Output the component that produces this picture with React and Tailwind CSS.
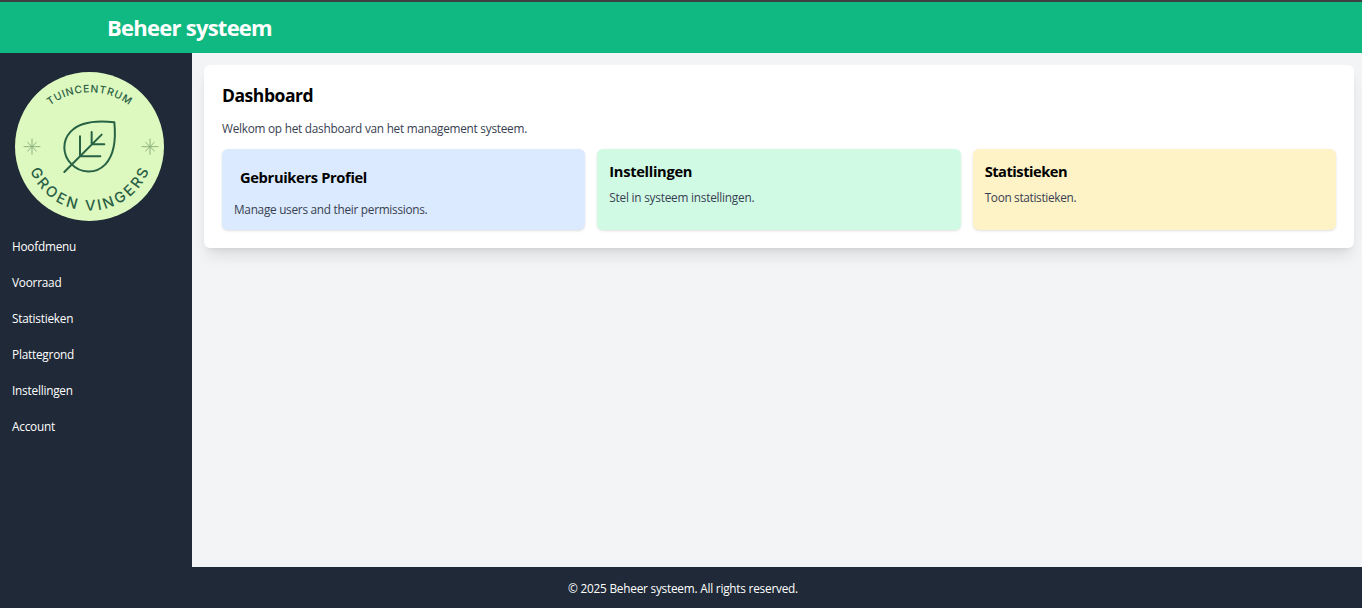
const navItems = ['Hoofdmenu', 'Voorraad', 'Statistieken', 'Plattegrond', 'Instellingen', 'Account'];

function Star({ x, y }) {
  return (
    <g transform={`translate(${x} ${y})`} stroke="#8db27c" strokeWidth="3" strokeLinecap="round">
      <path d="M-24 0H24M0-23V23M-13-13L13 13M-13 13L13-13" />
    </g>
  );
}

function Logo() {
  return (
    <svg viewBox="45 36 450 450" className="block size-[150px]" fontFamily="Inter, sans-serif" fill="#2a6045">
      <defs>
        <path id="arc-top" d="M109 177A200 200 0 0 1 429 177" />
        <path id="arc-bottom" d="M76 259A193 193 0 0 0 462 259" />
      </defs>
      <circle cx="268.5" cy="259.5" r="223.5" fill="#def9c0" />
      <text fontSize="31" fontWeight="500" textAnchor="middle" letterSpacing="2.2">
        <textPath href="#arc-top" startOffset="50%">TUINCENTRUM</textPath>
      </text>
      <text fontSize="44" fontWeight="500" textAnchor="middle" letterSpacing="8">
        <textPath href="#arc-bottom" startOffset="50.6%">GROEN VINGERS</textPath>
      </text>
      <g fill="none" stroke="#286244" strokeWidth="6" strokeLinecap="round" strokeLinejoin="round">
        <path d="M343 187C290 181 240 186 212 215C186 243 187 283 213 311C241 341 287 343 316 313C343 284 348 237 343 187Z" />
        <path d="M193 336L305 224M240 229V289H301M275 216V253H313" />
      </g>
      <Star x={96} y={260} />
      <Star x={450} y={260} />
    </svg>
  );
}

export default function App() {
  return (
    <div className="flex h-[608px] flex-col overflow-hidden bg-[#f3f4f6] font-['Open_Sans','Noto_Sans',sans-serif] text-[11.8px] leading-[18px] text-black">
      <header className="h-[53px] shrink-0 border-t-2 border-[#3f4042] bg-[#10b981] pt-3 pl-[107px] text-white">
        <h1 className="text-[22px] leading-[27px] font-bold tracking-[-0.75px]">Beheer systeem</h1>
      </header>
      <div className="flex min-h-0 flex-1">
        <aside className="w-48 shrink-0 bg-[#1f2937] pt-[19px] text-white">
          <div className="pl-[15px]">
            <Logo />
          </div>
          <nav className="mt-[9px] flex flex-col gap-1.5">
            {navItems.map((item) => (
              <a key={item} href="#" className="px-3 py-1.5 tracking-[-0.22px]">
                {item}
              </a>
            ))}
          </nav>
        </aside>
        <main className="flex-1 pt-3 pr-2 pl-3">
          <section className="rounded-md bg-white p-[18px] shadow-lg">
            <h2 className="text-[17.5px] leading-6 font-bold tracking-[-0.45px]">Dashboard</h2>
            <p className="mt-3 tracking-[-0.25px] text-[#374151]">Welkom op het dashboard van het management systeem.</p>
            <div className="mt-3 grid grid-cols-3 gap-3">
              <article className="rounded-md bg-[#dbeafe] p-3 shadow-sm">
                <h3 className="p-1.5 text-[14.7px] leading-[21px] font-bold tracking-[-0.35px]">Gebruikers Profiel</h3>
                <p className="mt-1.5 tracking-[-0.27px] text-[#374151]">Manage users and their permissions.</p>
              </article>
              <article className="rounded-md bg-[#d1fae5] p-3 shadow-sm">
                <h3 className="text-[14.7px] leading-[21px] font-bold tracking-[-0.32px]">Instellingen</h3>
                <p className="mt-1.5 tracking-[-0.22px] text-[#374151]">Stel in systeem instellingen.</p>
              </article>
              <article className="rounded-md bg-[#fef3c7] p-3 shadow-sm">
                <h3 className="text-[14.7px] leading-[21px] font-bold tracking-[-0.5px]">Statistieken</h3>
                <p className="mt-1.5 tracking-[-0.31px] text-[#374151]">Toon statistieken.</p>
              </article>
            </div>
          </section>
        </main>
      </div>
      <footer className="h-[41px] shrink-0 bg-[#1f2937] pt-3 pl-1 text-center text-white">
        <p className="tracking-[-0.22px]">© 2025 Beheer systeem. All rights reserved.</p>
      </footer>
    </div>
  );
}
